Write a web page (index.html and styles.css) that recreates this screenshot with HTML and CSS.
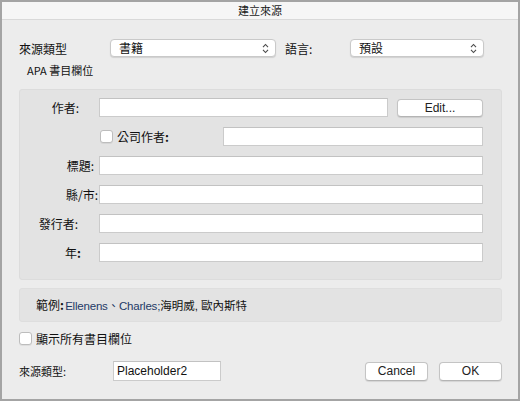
FILE: index.html
```html
<!DOCTYPE html>
<html lang="zh-Hant">
<head>
<meta charset="utf-8">
<title>建立來源</title>
<link rel="stylesheet" href="styles.css">
</head>
<body>
<div class="window">
  <div class="titlebar">建立來源</div>
  <div class="content">
    <div class="row-top">
      <span class="lbl-type">來源類型</span>
      <div class="select sel-type"><span>書籍</span>
        <svg class="chev" width="7" height="11" viewBox="0 0 7 11"><path d="M1 4.2 L3.5 1.5 L6 4.2 M1 6.8 L3.5 9.5 L6 6.8" fill="none" stroke="#4a4a4a" stroke-width="1.1"/></svg>
      </div>
      <span class="lbl-lang">語言:</span>
      <div class="select sel-lang"><span>預設</span>
        <svg class="chev" width="7" height="11" viewBox="0 0 7 11"><path d="M1 4.2 L3.5 1.5 L6 4.2 M1 6.8 L3.5 9.5 L6 6.8" fill="none" stroke="#4a4a4a" stroke-width="1.1"/></svg>
      </div>
    </div>

    <div class="group-title">APA 書目欄位</div>
    <div class="group">
      <label class="flabel l-author">作者:</label>
      <div class="fcell split">
        <div class="input in-author"></div>
        <button class="btn btn-edit">Edit...</button>
      </div>

      <span></span>
      <div class="fcell corp">
        <span class="check"></span>
        <span class="corp-label">公司作者<b>:</b></span>
        <div class="input in-corp"></div>
      </div>

      <label class="flabel l-title">標題:</label>
      <div class="fcell"><div class="input"></div></div>

      <label class="flabel l-city">縣/市:</label>
      <div class="fcell"><div class="input"></div></div>

      <label class="flabel l-pub">發行者:</label>
      <div class="fcell"><div class="input"></div></div>

      <label class="flabel l-year">年<b>:</b></label>
      <div class="fcell"><div class="input"></div></div>
    </div>

    <div class="example"><span class="ex-lbl">範例<b>:</b></span> <span class="ex-names">Ellenens、Charles;</span>海明威, 歐內斯特</div>

    <div class="showall">
      <span class="check"></span>
      <span>顯示所有書目欄位</span>
    </div>

    <div class="bottom">
      <span class="lbl-type2">來源類型:</span>
      <div class="input in-tag">Placeholder2</div>
      <div class="spacer"></div>
      <button class="btn btn-cancel">Cancel</button>
      <button class="btn btn-ok">OK</button>
    </div>
  </div>
</div>
</body>
</html>
```

FILE: styles.css
```css
* { box-sizing: border-box; }
html, body { margin: 0; padding: 0; }
body {
  font-family: "Noto Sans CJK TC", "Liberation Sans", sans-serif;
  font-size: 12px;
  color: #111;
  background: #ececec;
}
.window {
  width: 520px;
  height: 401px;
  border: 2px solid #a4a4a4;
  background: #ececec;
  overflow: hidden;
}
.titlebar {
  height: 18px;
  background: #f6f6f6;
  border-bottom: 1px solid #d9d9d9;
  text-align: center;
  font-size: 11px;
  line-height: 17px;
  color: #1a1a1a;
}
.content {
  padding: 0 16px 0 17px;
}
.row-top {
  display: flex;
  align-items: center;
  margin-top: 19px;
  height: 18px;
}
.lbl-type { width: 91px; font-size: 12px; }
.lbl-lang { width: 65px; margin-left: 9px; }
.select {
  height: 18px;
  background: #fff;
  border: 1px solid #c9c9c9;
  border-radius: 4px;
  box-shadow: 0 1px 1px rgba(0,0,0,0.12);
  display: flex;
  align-items: center;
  justify-content: space-between;
  padding: 0 6px 0 8px;
  font-size: 12px;
  line-height: 16px;
}
.sel-type { width: 166px; }
.sel-lang { width: 134px; padding-left: 8px; }
.chev { display: block; }

.group-title {
  margin: 6px 0 0 8px;
  height: 14px;
  font-size: 11px;
  line-height: 14px;
  color: #111;
}
.group {
  margin-top: 12px;
  width: 483px;
  height: 191px;
  background: #e3e3e3;
  border: 1px solid #dcdcdc;
  border-radius: 3px;
  display: grid;
  grid-template-columns: 79px 1fr;
  grid-auto-rows: 19px;
  row-gap: 10px;
  padding: 8px 18px 0 0;
  align-items: center;
}
.flabel {
  text-align: right;
  font-size: 12px;
  line-height: 19px;
}
.flabel b, .corp-label b, .ex-lbl b { font-weight: 700; }
.l-author { padding-right: 20px; }
.l-title { padding-right: 5px; }
.l-city { padding-right: 1px; }
.l-pub { padding-right: 21px; }
.l-year { padding-right: 18px; }
.fcell {
  height: 19px;
  display: flex;
  align-items: center;
}
.input {
  flex: 1;
  height: 19px;
  background: #fff;
  border: 1px solid #cbcbcb;
  border-top-color: #c2c2c2;
}
.split .in-author { flex: 0 0 289px; }
.btn {
  font-family: "Liberation Sans", sans-serif;
  font-size: 12px;
  color: #222;
  background: #fff;
  border: 1px solid #c4c4c4;
  border-bottom-color: #b4b4b4;
  border-radius: 4px;
  box-shadow: 0 1px 1px rgba(0,0,0,0.1);
  padding: 0;
  height: 18px;
  line-height: 16px;
}
.btn-edit { width: 86px; margin-left: 9px; }
.corp { padding-left: 1px; }
.check {
  display: inline-block;
  width: 13px;
  height: 13px;
  background: #fff;
  border: 1px solid #bdbdbd;
  border-radius: 3px;
  box-shadow: 0 1px 0 rgba(0,0,0,0.06);
  flex: none;
}
.corp-label { margin-left: 4px; }
.in-corp { flex: 0 0 260px; margin-left: auto; }

.example {
  margin-top: 8px;
  width: 483px;
  height: 34px;
  background: #e3e3e3;
  border: 1px solid #dedede;
  border-radius: 3px;
  padding-left: 16px;
  line-height: 32px;
  font-family: "Liberation Sans", "Noto Sans CJK TC", sans-serif;
  font-size: 11.5px;
  color: #111;
}
.ex-lbl { font-family: "Noto Sans CJK TC", sans-serif; font-size: 12px; }
.ex-names { color: #1e3a66; margin-left: -2px; letter-spacing: -0.2px; }

.showall {
  margin-top: 9px;
  height: 14px;
  display: flex;
  align-items: center;
  gap: 4px;
  font-size: 12px;
}
.bottom {
  margin-top: 16px;
  height: 20px;
  display: flex;
  align-items: center;
}
.lbl-type2 { width: 94px; font-size: 11px; }
.in-tag {
  flex: 0 0 108px;
  height: 20px;
  font-family: "Liberation Sans", sans-serif;
  font-size: 12px;
  line-height: 18px;
  padding-left: 3px;
  color: #111;
}
.spacer { flex: 1; }
.btn-cancel { width: 63px; height: 19px; }
.btn-ok { width: 63px; height: 19px; margin-left: 11px; }
```
